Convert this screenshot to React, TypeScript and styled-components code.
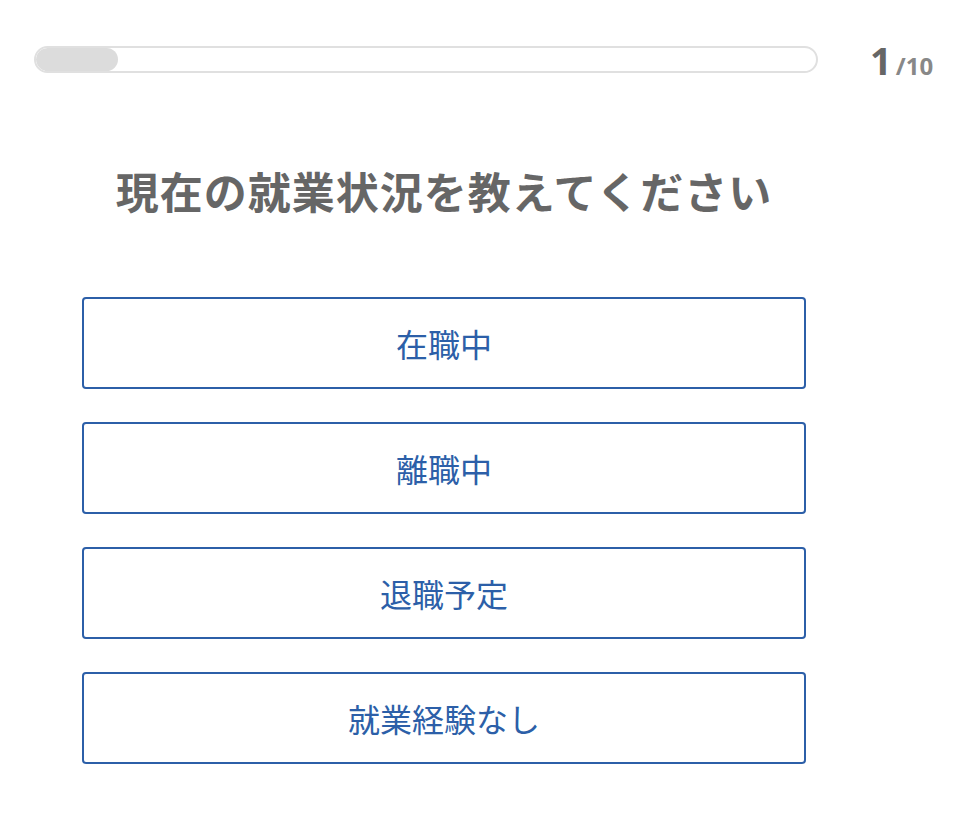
import React, { useState } from 'react';
import styled, { createGlobalStyle } from 'styled-components';

const GlobalStyle = createGlobalStyle`
  body {
    margin: 0;
    background: #ffffff;
    font-family: 'Noto Sans', 'Noto Sans CJK JP', sans-serif;
  }
`;

const Page = styled.div`
  width: 972px;
  min-height: 840px;
  background: #fff;
`;

const ProgressHeader = styled.div`
  display: flex;
  align-items: center;
  height: 27px;
  padding: 46px 0 0 34px;
`;

const Track = styled.div`
  width: 784px;
  height: 27px;
  box-sizing: border-box;
  border: 2px solid #e0e0e0;
  border-radius: 14px;
  overflow: hidden;
`;

const Fill = styled.div`
  height: 100%;
  background: #dcdcdc;
  border-radius: 14px;
`;

const Counter = styled.div`
  margin-left: 52px;
  display: flex;
  align-items: baseline;
  font-family: 'Noto Sans', 'Noto Sans CJK JP', sans-serif;
  font-weight: 700;
`;

const Current = styled.span`
  font-size: 38px;
  color: #666;
  line-height: 1;
`;

const Total = styled.span`
  font-size: 24px;
  color: #888;
  margin-left: 4px;
  line-height: 1;
`;

const Main = styled.div`
  width: 724px;
  margin-left: 82px;
`;

const Question = styled.h1`
  margin: 91px 0 0;
  text-align: center;
  font-family: 'Noto Sans CJK JP', sans-serif;
  font-size: 43px;
  line-height: 52px;
  font-weight: 700;
  color: #666;
  letter-spacing: 1px;
`;

const Options = styled.div`
  display: flex;
  flex-direction: column;
  gap: 33px;
  margin-top: 81px;
`;

const Option = styled.button<{ $selected?: boolean }>`
  height: 92px;
  box-sizing: border-box;
  border: 2px solid #2c5fa8;
  border-radius: 4px;
  background: ${(p) => (p.$selected ? '#2c5fa8' : '#fff')};
  color: ${(p) => (p.$selected ? '#fff' : '#2c5fa8')};
  font-family: 'Noto Sans CJK JP', sans-serif;
  font-size: 32px;
  cursor: pointer;
`;

const choices = ['在職中', '離職中', '退職予定', '就業経験なし'];

const App: React.FC = () => {
  const [selected, setSelected] = useState<string | null>(null);
  const step = 1;
  const total = 10;

  return (
    <Page>
      <GlobalStyle />
      <ProgressHeader>
        <Track>
          <Fill style={{ width: `${(step / total) * 100 + 0.5}%` }} />
        </Track>
        <Counter>
          <Current>{step}</Current>
          <Total>/{total}</Total>
        </Counter>
      </ProgressHeader>
      <Main>
        <Question>現在の就業状況を教えてください</Question>
        <Options>
          {choices.map((c) => (
            <Option key={c} $selected={selected === c} onClick={() => setSelected(c)}>
              {c}
            </Option>
          ))}
        </Options>
      </Main>
    </Page>
  );
};

export default App;
